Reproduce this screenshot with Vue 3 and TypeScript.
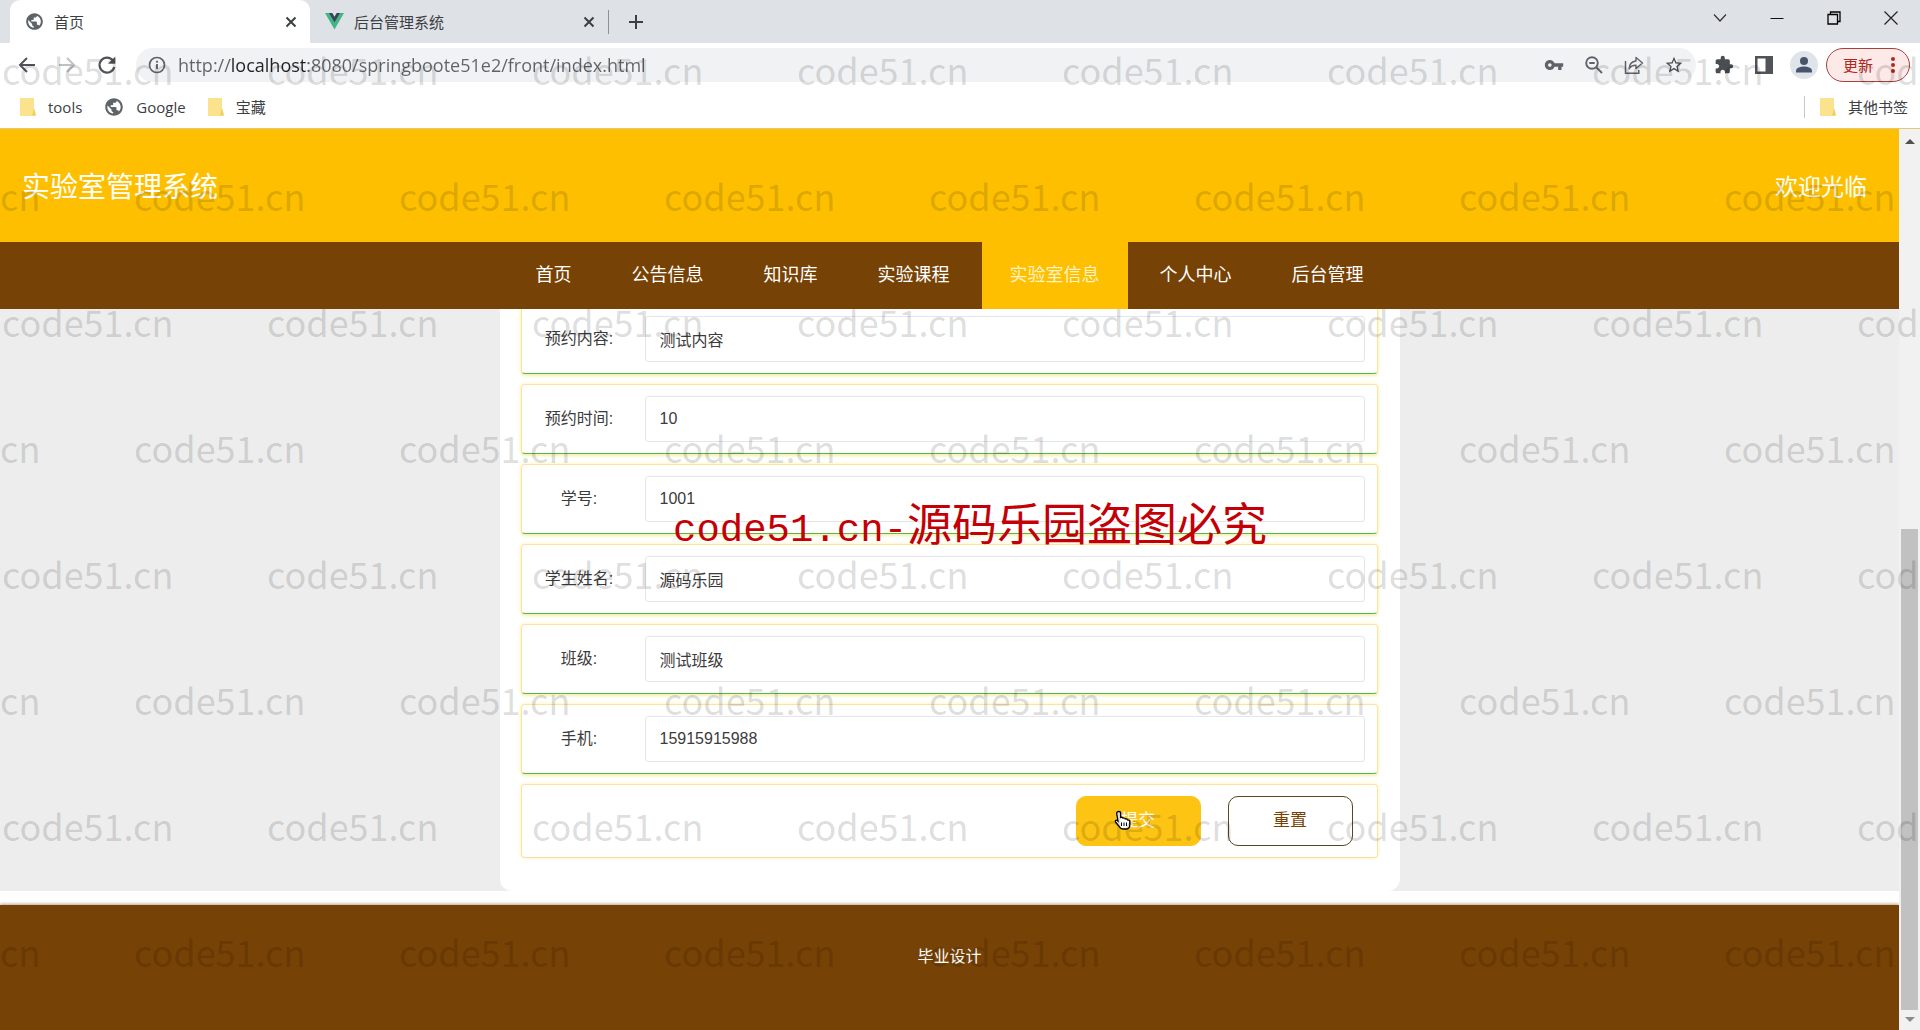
<script setup lang="ts">
import { ref } from 'vue'

interface Field {
  id: string
  label: string
  value: string
}

const globePath =
  'M12 1.500C6.200 1.500 1.500 6.200 1.500 12s4.700 10.500 10.500 10.500 10.500-4.700 10.500-10.500S17.800 1.500 12 1.500zm-1 18.430c-3.950-.49-7-3.850-7-7.930 0-.62.08-1.210.21-1.790L9 15v1c0 1.100.9 2 2 2v1.930zm6.900-2.540c-.26-.81-1-1.390-1.900-1.390h-1v-3c0-.55-.45-1-1-1H8v-2h2c.55 0 1-.45 1-1V7h2c1.100 0 2-.9 2-2v-.41c2.930 1.190 5 4.060 5 7.410 0 2.080-.8 3.970-2.100 5.390z'

const address = ref('http://localhost:8080/springboote51e2/front/index.html')

const navItems = ['首页', '公告信息', '知识库', '实验课程', '实验室信息', '个人中心', '后台管理']
const activeNav = ref('实验室信息')

const fields = ref<Field[]>([
  { id: 'content', label: '预约内容:', value: '测试内容' },
  { id: 'time', label: '预约时间:', value: '10' },
  { id: 'number', label: '学号:', value: '1001' },
  { id: 'name', label: '学生姓名:', value: '源码乐园' },
  { id: 'class', label: '班级:', value: '测试班级' },
  { id: 'phone', label: '手机:', value: '15915915988' },
])

const markRows = 8
const markCols = 9
</script>

<template>
  <div class="browser">
    <div class="tabs">
      <div class="tab tab-active">
        <svg class="fav" viewBox="0 0 24 24"><path :d="globePath" fill="#5f6368" /></svg>
        <span class="tab-title">首页</span>
        <button class="plain" type="button" aria-label="关闭">
          <svg width="12" height="12" viewBox="0 0 12 12"><path d="M1.500 1.500l9 9M10.500 1.500l-9 9" stroke="#3c4043" stroke-width="2" /></svg>
        </button>
      </div>
      <div class="tab">
        <svg class="fav" viewBox="0 0 20 18">
          <path d="M0 0h4l6 10.400L16 0h4L10 17.500z" fill="#41b883" />
          <path d="M4 0h3.700L10 4l2.300-4H16l-6 10.400z" fill="#35495e" />
        </svg>
        <span class="tab-title">后台管理系统</span>
        <button class="plain" type="button" aria-label="关闭">
          <svg width="12" height="12" viewBox="0 0 12 12"><path d="M1.500 1.500l9 9M10.500 1.500l-9 9" stroke="#3c4043" stroke-width="2" /></svg>
        </button>
      </div>
      <span class="tab-sep"></span>
      <button class="plain new-tab" type="button" aria-label="新标签页">
        <svg width="16" height="16" viewBox="0 0 16 16"><path d="M8 1v14M1 8h14" stroke="#3c4043" stroke-width="2" /></svg>
      </button>
      <div class="window-buttons">
        <button class="plain" type="button" aria-label="搜索标签页">
          <svg width="16" height="16" viewBox="0 0 16 16"><path d="M2 4.500l6 6.500 6-6.500" fill="none" stroke="#333" stroke-width="1.200" /></svg>
        </button>
        <button class="plain" type="button" aria-label="最小化">
          <svg width="16" height="16" viewBox="0 0 16 16"><path d="M1.500 8.500h13" stroke="#111" /></svg>
        </button>
        <button class="plain" type="button" aria-label="还原">
          <svg width="16" height="16" viewBox="0 0 16 16"><path d="M2 4.500h9.500V14H2zM4.500 4.500V2H14v9.500h-2.500" fill="none" stroke="#000" stroke-width="1.300" /></svg>
        </button>
        <button class="plain" type="button" aria-label="关闭窗口">
          <svg width="16" height="16" viewBox="0 0 16 16"><path d="M1.500 1.500l13 13M14.500 1.500l-13 13" stroke="#222" stroke-width="1.200" /></svg>
        </button>
      </div>
    </div>

    <div class="toolbar">
      <div class="history">
        <button class="plain" type="button" aria-label="后退">
          <svg width="20" height="20" viewBox="0 0 20 20"><path d="M18 10H3M10 3l-7 7 7 7" fill="none" stroke="#505357" stroke-width="2" /></svg>
        </button>
        <button class="plain" type="button" aria-label="前进">
          <svg width="20" height="20" viewBox="0 0 20 20"><path d="M2 10h15M10 3l7 7-7 7" fill="none" stroke="#bfc1c4" stroke-width="2" /></svg>
        </button>
        <button class="plain" type="button" aria-label="重新加载">
          <svg width="20" height="20" viewBox="0 0 20 20">
            <path d="M16 5.500A7.500 7.500 0 1 0 17.300 12" fill="none" stroke="#505357" stroke-width="2.200" />
            <path d="M18.300 1.500v7.300H11z" fill="#505357" />
          </svg>
        </button>
      </div>
      <div class="omnibox">
        <svg width="18" height="18" viewBox="0 0 18 18">
          <circle cx="9" cy="9" r="7.500" fill="none" stroke="#5f6368" stroke-width="1.700" />
          <path d="M9 8v5M9 4.800v1.900" stroke="#5f6368" stroke-width="1.800" />
        </svg>
        <input v-model="address" class="url" type="text" aria-label="地址" />
        <div class="omni-icons">
          <button class="plain" type="button" aria-label="密码">
            <svg width="20" height="20" viewBox="0 0 24 24"><path d="M12.650 10C11.830 7.670 9.610 6 7 6c-3.310 0-6 2.690-6 6s2.690 6 6 6c2.610 0 4.830-1.670 5.650-4H17v4h4v-4h2v-4H12.650zM7 14.200c-1.200 0-2.200-1-2.200-2.200s1-2.200 2.200-2.200 2.200 1 2.200 2.200-1 2.200-2.200 2.200z" fill="#5f6368" /></svg>
          </button>
          <button class="plain" type="button" aria-label="缩放">
            <svg width="20" height="20" viewBox="0 0 20 20"><circle cx="8" cy="8" r="5.800" fill="none" stroke="#5f6368" stroke-width="1.900" /><path d="M12.300 12.300l5.700 5.700M5.300 8h5.400" stroke="#5f6368" stroke-width="1.900" /></svg>
          </button>
          <button class="plain" type="button" aria-label="分享">
            <svg width="20" height="20" viewBox="0 0 20 20"><path d="M1.500 6v12.200h13.300V15" fill="none" stroke="#5f6368" stroke-width="1.500" /><path d="M12 2.500l6.500 5.500-6.500 5.500v-3.200c-3.500 0-5.500 1-7 3.700.3-4.500 2.800-7.500 7-8z" fill="none" stroke="#5f6368" stroke-width="1.400" stroke-linejoin="round" /></svg>
          </button>
          <button class="plain" type="button" aria-label="收藏">
            <svg width="20" height="20" viewBox="0 0 24 24"><path d="M22 9.240l-7.190-.62L12 2 9.190 8.630 2 9.240l5.460 4.730L5.820 21 12 17.270 18.180 21l-1.630-7.030L22 9.240zM12 15.400l-3.760 2.270 1-4.280-3.320-2.880 4.380-.38L12 6.100l1.710 4.040 4.380.38-3.320 2.880 1 4.280L12 15.400z" fill="#4d5155" /></svg>
          </button>
        </div>
      </div>
      <div class="actions">
        <button class="plain" type="button" aria-label="扩展程序">
          <svg width="20" height="20" viewBox="0 0 24 24"><path d="M20.500 11H19V7c0-1.100-.9-2-2-2h-4V3.500a2.500 2.500 0 0 0-5 0V5H4c-1.100 0-1.990.9-1.990 2v3.800H3.500c1.490 0 2.700 1.210 2.700 2.700s-1.210 2.700-2.700 2.700H2V20c0 1.100.9 2 2 2h3.800v-1.500c0-1.490 1.210-2.700 2.700-2.700s2.700 1.210 2.700 2.700V22H17c1.100 0 2-.9 2-2v-4h1.500a2.500 2.500 0 0 0 0-5z" fill="#4a4d51" /></svg>
        </button>
        <button class="plain" type="button" aria-label="侧边栏">
          <svg width="20" height="20" viewBox="0 0 20 20"><path d="M1 1h18v18H1zM3.500 3.500v13h8v-13z" fill="#505357" fill-rule="evenodd" /></svg>
        </button>
        <button class="plain avatar" type="button" aria-label="个人资料">
          <svg width="20" height="20" viewBox="0 0 20 20"><circle cx="10" cy="6" r="4" fill="#48546a" /><path d="M2 17.500v-1.800c0-3 5-4.200 8-4.200s8 1.200 8 4.200v1.800z" fill="#48546a" /></svg>
        </button>
      </div>
      <button class="update" type="button">
        <span>更新</span>
        <svg width="4" height="18" viewBox="0 0 4 18"><circle cx="2" cy="3" r="2" fill="#b3261e" /><circle cx="2" cy="9" r="2" fill="#b3261e" /><circle cx="2" cy="15" r="2" fill="#b3261e" /></svg>
      </button>
    </div>

    <div class="bookmarks">
      <a class="bookmark" href="#">
        <svg width="16" height="20" viewBox="0 0 16 20"><path d="M0 1h14v12l2 6H0z" fill="#fbe38e" /><path d="M14 11l2 7-4 1z" fill="#f0cf60" /></svg>
        <span>tools</span>
      </a>
      <a class="bookmark" href="#">
        <svg width="20" height="20" viewBox="0 0 24 24"><path :d="globePath" fill="#5f6368" /></svg>
        <span>Google</span>
      </a>
      <a class="bookmark" href="#">
        <svg width="16" height="20" viewBox="0 0 16 20"><path d="M0 1h14v12l2 6H0z" fill="#fbe38e" /><path d="M14 11l2 7-4 1z" fill="#f0cf60" /></svg>
        <span>宝藏</span>
      </a>
      <a class="bookmark others" href="#">
        <svg width="16" height="20" viewBox="0 0 16 20"><path d="M0 1h14v12l2 6H0z" fill="#fbe38e" /><path d="M14 11l2 7-4 1z" fill="#f0cf60" /></svg>
        <span>其他书签</span>
      </a>
    </div>

    <div class="viewport">
      <div class="page">
        <header class="banner">
          <h1>实验室管理系统</h1>
          <span class="welcome">欢迎光临</span>
        </header>
        <nav class="nav">
          <a
            v-for="item in navItems"
            :key="item"
            href="#"
            :class="{ current: item === activeNav }"
            @click.prevent="activeNav = item"
          >{{ item }}</a>
        </nav>
        <main class="content">
          <form class="card" @submit.prevent>
            <div v-for="field in fields" :key="field.id" class="row">
              <label :for="field.id">{{ field.label }}</label>
              <input :id="field.id" v-model="field.value" type="text" />
            </div>
            <div class="row buttons">
              <button class="submit" type="submit">
                提交
                <svg class="hand" width="18" height="20" viewBox="0 0 18 20">
                  <path d="M5 1.500c1 0 1.600.7 1.600 1.600v4.400c.9-.5 2-.2 2.400.6.9-.4 1.900-.1 2.300.8.9-.3 1.900.1 2.200 1 1.300-.3 2.300.4 2.300 1.700v2.900c0 2.700-1.300 4.500-3.300 4.500H8.700c-1.300 0-2.200-.6-3-1.800L1.500 12c-.7-1 .4-2.300 1.600-1.600l.9.700-1.300-7.500C2.500 2.300 3.500 1.500 5 1.500z" fill="#fff" stroke="#000" stroke-width="1.300" />
                  <path d="M7.500 12.500v3.500M10 12.500v3.500M12.500 12.500v3.500" stroke="#000" />
                </svg>
              </button>
              <button class="reset" type="button">重置</button>
            </div>
          </form>
        </main>
        <footer class="footer">毕业设计</footer>
      </div>
      <div class="scrollbar" aria-hidden="true">
        <svg width="10" height="5" viewBox="0 0 10 5"><path d="M0 5l5-5 5 5z" fill="#505050" /></svg>
        <div class="track"><div class="thumb"></div></div>
        <svg width="10" height="5" viewBox="0 0 10 5"><path d="M0 0l5 5 5-5z" fill="#8b8b8b" /></svg>
      </div>
    </div>

    <div class="marks" aria-hidden="true">
      <div v-for="r in markRows" :key="r" class="mark-row">
        <span v-for="c in markCols" :key="c">code51.cn</span>
      </div>
    </div>
    <div class="notice"><span class="notice-latin">code51.cn-</span>源码乐园盗图必究</div>
  </div>
</template>

<style>
body {
  margin: 0;
}
</style>

<style scoped>
.browser {
  position: relative;
  display: flex;
  flex-direction: column;
  min-height: 100vh;
  overflow: hidden;
  background: #fff;
  color: #3c4043;
  font-family: 'Open Sans', 'Noto Sans CJK SC', sans-serif;
  font-size: 15px;
}
.browser * {
  box-sizing: border-box;
}
svg {
  display: block;
  flex: none;
}
a {
  color: inherit;
  text-decoration: none;
}
.plain {
  display: flex;
  padding: 0;
  border: 0;
  background: none;
}
.tabs {
  display: flex;
  align-items: center;
  height: 43px;
  padding: 0 21px 0 10px;
  background: #dee1e6;
}
.tab {
  display: flex;
  align-items: center;
  gap: 10px;
  width: 298px;
  height: 43px;
  padding: 0 13px 0 15px;
}
.tab-active {
  width: 300px;
  border-radius: 10px 10px 0 0;
  background: #fff;
}
.fav {
  width: 19px;
  height: 19px;
}
.tab-title {
  flex: 1;
  line-height: 22px;
}
.tab-sep {
  width: 1px;
  height: 24px;
  background: #8e9196;
}
.new-tab {
  margin-left: 19px;
}
.window-buttons {
  display: flex;
  gap: 41px;
  height: 36px;
  align-items: center;
  align-self: flex-start;
  margin-left: auto;
}
.toolbar {
  display: flex;
  align-items: center;
  height: 44px;
  padding: 0 10px 0 17px;
}
.history {
  display: flex;
  gap: 20px;
}
.omnibox {
  display: flex;
  align-items: center;
  flex: 1;
  height: 34px;
  margin-left: 19px;
  padding: 0 12px;
  border-radius: 17px;
  background: #f0f2f4;
}
.url {
  flex: 1;
  height: 30px;
  margin-left: 12px;
  padding: 0;
  border: 0;
  outline: 0;
  background: linear-gradient(90deg, #5f6368 52px, #202124 52px, #202124 130px, #5f6368 130px);
  background-clip: text;
  color: transparent;
  font: 18px/30px 'Open Sans', sans-serif;
}
.omni-icons,
.actions {
  display: flex;
  align-items: center;
  gap: 20px;
}
.actions {
  margin: 0 8px 0 18px;
}
.avatar {
  align-items: center;
  justify-content: center;
  width: 28px;
  height: 28px;
  margin-left: -4px;
  border-radius: 50%;
  background: #dfe3ea;
}
.update {
  display: flex;
  align-items: center;
  gap: 18px;
  height: 34px;
  padding: 0 14px 0 16px;
  border: 1px solid #a8403c;
  border-radius: 17px;
  background: #fce9e8;
  color: #b3261e;
  font: 15px/22px 'Noto Sans CJK SC', sans-serif;
}
.bookmarks {
  display: flex;
  align-items: center;
  gap: 22px;
  height: 42px;
  padding: 0 12px 2px 20px;
  border-bottom: 1px solid #e2c67c;
}
.bookmark {
  display: flex;
  align-items: center;
  gap: 12px;
  font-size: 15px;
  line-height: 22px;
}
.others {
  margin-left: auto;
  padding-left: 15px;
  border-left: 1px solid #c4c7cc;
}
.viewport {
  display: flex;
  flex: 1;
}
.page {
  display: flex;
  flex: 1;
  flex-direction: column;
  background: #fff;
}
.banner {
  display: flex;
  align-items: center;
  justify-content: space-between;
  height: 113px;
  padding: 0 32px 2px 22px;
  background: #fdbf00;
  color: #fff;
}
h1 {
  margin: 0;
  font-size: 28px;
  font-weight: 400;
}
.welcome {
  font-size: 23px;
}
.nav {
  position: relative;
  z-index: 1;
  display: flex;
  justify-content: center;
  gap: 4px;
  height: 67px;
  background: #774205;
  color: #fff;
  font-size: 18px;
  line-height: 64px;
}
.nav a {
  padding: 0 28px;
}
.nav .current {
  background: #fdbf00;
  color: #fff3c4;
}
.content {
  margin-bottom: 14px;
  background: #ededed;
}
.card {
  display: flex;
  flex-direction: column;
  gap: 10px;
  width: 900px;
  margin: -5px auto 0;
  padding: 0 22px 33px 21px;
  border-radius: 0 0 12px 12px;
  background: #fff;
}
.row {
  display: flex;
  align-items: center;
  height: 70px;
  padding: 0 12px 0 0;
  border: 1px solid #fde3a2;
  border-bottom-color: #63b246;
  border-radius: 4px;
  box-shadow: 0 0 4px #fff0b8, 0 2px 3px #e6f9b8;
  color: #3c3c3c;
  font: 16px/24px 'Liberation Sans', 'Noto Sans CJK SC', sans-serif;
}
.row label {
  width: 115px;
  margin-right: 8px;
  text-align: center;
}
.row input {
  flex: 1;
  height: 46px;
  padding: 0 14px;
  border: 1px solid #e4e7ea;
  border-radius: 3px;
  outline: 0;
  background: #fff;
  color: #3c3c3c;
  font: inherit;
}
.buttons {
  justify-content: flex-end;
  gap: 27px;
  height: 74px;
  padding-right: 24px;
  border-bottom-color: #fbdca0;
  box-shadow: 0 0 4px #fff0b8;
}
.buttons button {
  position: relative;
  width: 125px;
  height: 50px;
  padding: 0 0 4px;
  border: 1px solid #fec414;
  border-radius: 10px;
  background: #fec414;
  color: #fff;
  font: 17px/24px 'Noto Sans CJK SC', sans-serif;
}
.buttons .reset {
  border-color: #5c4424;
  background: #fff;
  color: #774205;
}
.hand {
  position: absolute;
  top: 13px;
  left: 37px;
}
.footer {
  flex: 1;
  padding-top: 39px;
  background: #774205;
  box-shadow: 0 -1px 3px #b8a48c;
  color: #fff;
  font-size: 16px;
  line-height: 24px;
  text-align: center;
}
.scrollbar {
  display: flex;
  flex-direction: column;
  align-items: center;
  width: 21px;
  padding: 10px 2px 8px;
  background: #f1f1f1;
}
.track {
  display: flex;
  flex: 1;
  flex-direction: column;
  justify-content: flex-end;
  width: 100%;
  margin: 7px 0;
}
.thumb {
  height: 56%;
  background: #c1c1c1;
}
.marks {
  position: absolute;
  inset: 0;
  overflow: hidden;
  padding-top: 6px;
  color: rgba(0, 0, 0, 0.15);
  font: 36px/126px 'Noto Sans CJK SC', sans-serif;
  pointer-events: none;
}
.mark-row {
  display: flex;
  margin-left: 2px;
}
.mark-row:nth-child(even) {
  margin-left: -131px;
}
.mark-row span {
  flex: none;
  width: 265px;
}
.notice {
  position: absolute;
  top: 490px;
  left: 673px;
  color: #c40006;
  font: 45px/64px 'Noto Sans CJK SC', sans-serif;
  white-space: nowrap;
  pointer-events: none;
}
.notice-latin {
  font: 39px/64px 'Liberation Mono', monospace;
}
</style>
